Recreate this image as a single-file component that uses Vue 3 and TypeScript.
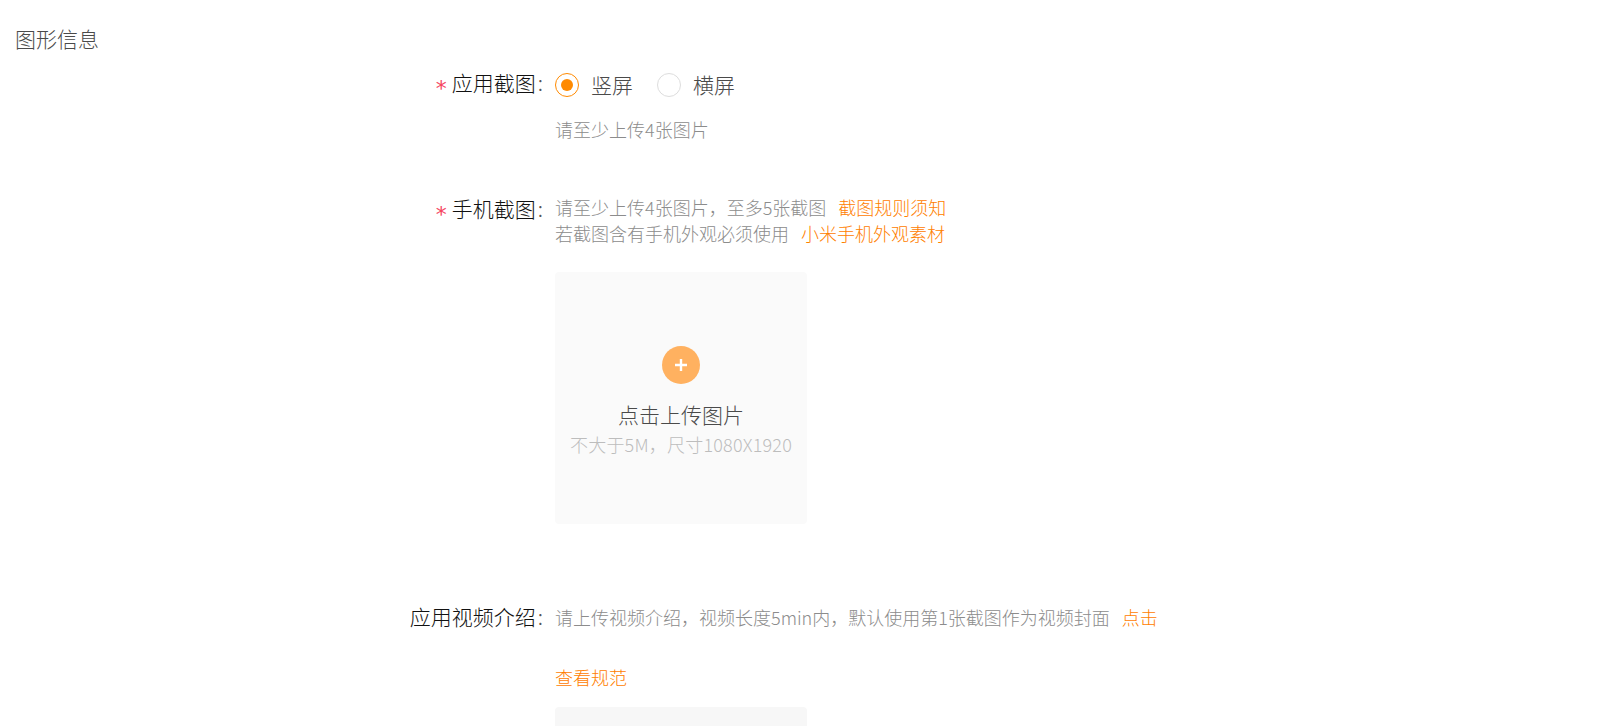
<script setup lang="ts">
</script>

<template>
  <div class="page">
    <h2 class="title">图形信息</h2>

    <div class="row row-shots">
      <div class="label"><span class="star">*</span>应用截图<span class="colon">:</span></div>
      <div class="field">
        <div class="radios">
          <div class="radio"><span class="dot on"></span><span class="radio-text">竖屏</span></div>
          <div class="radio"><span class="dot"></span><span class="radio-text">横屏</span></div>
        </div>
        <p class="hint hint-first">请至少上传4张图片</p>
      </div>
    </div>

    <div class="row row-phone">
      <div class="label label-phone"><span class="star">*</span>手机截图<span class="colon">:</span></div>
      <div class="field">
        <p class="hint tight">请至少上传4张图片，至多5张截图<a class="link">截图规则须知</a></p>
        <p class="hint tight">若截图含有手机外观必须使用<a class="link">小米手机外观素材</a></p>
        <div class="upload">
          <span class="plus">
            <svg width="12" height="12" viewBox="0 0 12 12"><path d="M6 0v12M0 6h12" stroke="#fff" stroke-width="2.4" fill="none" /></svg>
          </span>
          <div class="up-title">点击上传图片</div>
          <div class="up-sub">不大于5M，尺寸1080X1920</div>
        </div>
      </div>
    </div>

    <div class="row row-video">
      <div class="label label-video">应用视频介绍<span class="colon">:</span></div>
      <div class="field">
        <p class="hint wrap">请上传视频介绍，视频长度5min内，默认使用第1张截图作为视频封面<a class="link">点击查看规范</a></p>
        <div class="upload video"></div>
      </div>
    </div>
  </div>
</template>

<style scoped>
.page {
  height: 726px;
  overflow: hidden;
  padding: 23px 0 0 15px;
  box-sizing: border-box;
  font-family: "Noto Sans CJK SC", "Liberation Sans", sans-serif;
  font-weight: 300;
  background: #fff;
}
.title {
  margin: 0 0 1px;
  font-size: 21px;
  line-height: 30px;
  font-weight: 300;
  color: #4a4a4a;
}
.row { display: flex; }
.label {
  width: 540px;
  flex: none;
  box-sizing: border-box;
  padding-right: 12px;
  text-align: right;
  font-size: 21px;
  line-height: 26px;
  color: #111;
}
.label-phone { padding-top: 1px; }
.label-video { padding-top: 16px; }
.star {
  font-family: "DejaVu Sans", sans-serif;
  font-weight: 400;
  color: #f5465f;
  margin-right: 5px;
  font-size: 22px;
  line-height: 0;
  vertical-align: -5px;
}
.colon { color: #555; margin-left: 2px; }
.field { width: 610px; }
.row-shots { margin-top: 16px; }
.row-phone { margin-top: 51px; }
.row-video { margin-top: 63px; }
.radios { display: flex; height: 32px; align-items: center; }
.radio {
  display: flex;
  align-items: center;
  font-size: 21px;
  line-height: 30px;
  color: #4a4a4a;
  margin-right: 24px;
}
.radio-text { margin-bottom: 3px; }
.dot {
  width: 24px;
  height: 24px;
  border-radius: 50%;
  border: 1px solid #ddd;
  box-sizing: border-box;
  margin-right: 12px;
  position: relative;
}
.dot.on { border-color: #ff8a00; }
.dot.on::after {
  content: "";
  position: absolute;
  inset: 5px;
  border-radius: 50%;
  background: #ff8a00;
}
.hint {
  margin: 0;
  font-size: 18px;
  line-height: 27px;
  color: #8c8c8c;
}
.hint-first { margin-top: 15px; }
.tight { line-height: 26px; }
.wrap { line-height: 60px; }
.link { color: #ff8000; margin-left: 12px; }
.upload {
  width: 252px;
  height: 252px;
  margin-top: 26px;
  background: #fafafa;
  border-radius: 4px;
  display: flex;
  flex-direction: column;
  align-items: center;
  padding-top: 74px;
  box-sizing: border-box;
}
.upload.video { margin-top: 0; background: #f7f7f7; }
.plus {
  width: 38px;
  height: 38px;
  border-radius: 50%;
  background: #ffb160;
  display: flex;
  align-items: center;
  justify-content: center;
}
.up-title { margin-top: 14px; font-size: 21px; line-height: 33px; color: #4a4a4a; }
.up-sub { font-size: 18px; line-height: 27px; color: #bdbdbd; white-space: nowrap; letter-spacing: 0.2px; }
</style>
